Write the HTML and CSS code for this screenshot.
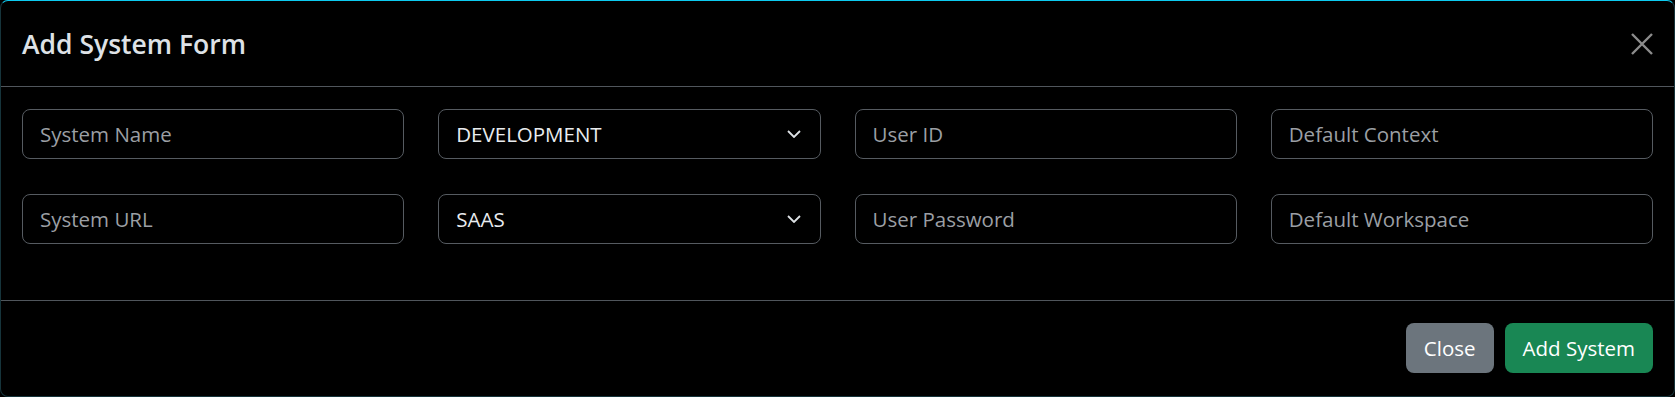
FILE: index.html
```html
<!DOCTYPE html>
<html lang="en">
<head>
    <meta charset="UTF-8">
    <meta name="viewport" content="width=device-width, initial-scale=1.0">
    <title>Add System Form</title>
    <link rel="stylesheet" href="styles.css">
</head>
<body>

    <div class="modal-content">
        <div class="modal-header">
            <h4 class="modal-title">Add System Form</h4>
            <button class="btn-close" aria-label="Close">
                <svg viewBox="0 0 22 22" width="22" height="22">
                    <path d="M1 1L21 21M21 1L1 21" stroke="#8c8c8c" stroke-width="2.4" fill="none"/>
                </svg>
            </button>
        </div>

        <div class="modal-body">
            <div class="form-grid">
                <input class="form-control" type="text" placeholder="System Name">
                <div class="select-wrap">
                    <select class="form-select">
                        <option>DEVELOPMENT</option>
                        <option>TEST</option>
                        <option>PRODUCTION</option>
                    </select>
                    <svg class="chevron" viewBox="0 0 14 8" width="14" height="8">
                        <path d="M1 1L7 7L13 1" stroke="#dee2e6" stroke-width="1.8" fill="none"/>
                    </svg>
                </div>
                <input class="form-control" type="text" placeholder="User ID">
                <input class="form-control" type="text" placeholder="Default Context">

                <input class="form-control" type="text" placeholder="System URL">
                <div class="select-wrap">
                    <select class="form-select">
                        <option>SAAS</option>
                        <option>ON PREMISE</option>
                    </select>
                    <svg class="chevron" viewBox="0 0 14 8" width="14" height="8">
                        <path d="M1 1L7 7L13 1" stroke="#dee2e6" stroke-width="1.8" fill="none"/>
                    </svg>
                </div>
                <input class="form-control" type="password" placeholder="User Password">
                <input class="form-control" type="text" placeholder="Default Workspace">
            </div>
        </div>

        <div class="modal-footer">
            <button class="btn btn-secondary">Close</button>
            <button class="btn btn-success">Add System</button>
        </div>
    </div>

</body>
</html>
```

FILE: styles.css
```css
* {
    margin: 0;
    padding: 0;
    box-sizing: border-box;
}

body {
    background-color: #000;
    font-family: "Open Sans", "Noto Sans", sans-serif;
    color: #dee2e6;
    width: 1675px;
    height: 397px;
    overflow: hidden;
}

.modal-content {
    height: 397px;
    background-color: #000;
    border: 1px solid #16343b;
    border-top-color: #0dcaf0;
    border-radius: 8px;
    display: flex;
    flex-direction: column;
}

.modal-header {
    height: 86px;
    padding: 0 21px;
    border-bottom: 1px solid #50565c;
    display: flex;
    align-items: center;
    justify-content: space-between;
}

.modal-title {
    font-size: 26.5px;
    font-weight: 600;
    color: #dee2e6;
}

.btn-close {
    background: none;
    border: none;
    width: 22px;
    height: 22px;
    cursor: pointer;
    display: flex;
}

.modal-body {
    padding: 22px 21px 56px;
    border-bottom: 1px solid #50565c;
}

.form-grid {
    display: grid;
    grid-template-columns: repeat(4, 1fr);
    grid-auto-rows: 50px;
    column-gap: 34px;
    row-gap: 35px;
}

.form-control,
.form-select {
    width: 100%;
    height: 50px;
    background-color: #000;
    border: 1px solid #565b61;
    border-radius: 8px;
    padding: 0 17px;
    font-family: inherit;
    font-size: 20.5px;
    color: #e9ecef;
    outline: none;
}

.form-control::placeholder {
    color: #9b9fa4;
}

.select-wrap {
    position: relative;
}

.form-select {
    appearance: none;
    -webkit-appearance: none;
}

.chevron {
    position: absolute;
    right: 20px;
    top: 21px;
    pointer-events: none;
}

.modal-footer {
    flex: 1;
    display: flex;
    justify-content: flex-end;
    align-items: flex-start;
    gap: 11px;
    padding: 22px 21px 0;
}

.btn {
    height: 50px;
    padding: 0 18px;
    border: none;
    border-radius: 8px;
    font-family: inherit;
    font-size: 20.5px;
    color: #fff;
    cursor: pointer;
}

.btn-secondary {
    background-color: #6c757d;
}

.btn-success {
    background-color: #198754;
}
```
